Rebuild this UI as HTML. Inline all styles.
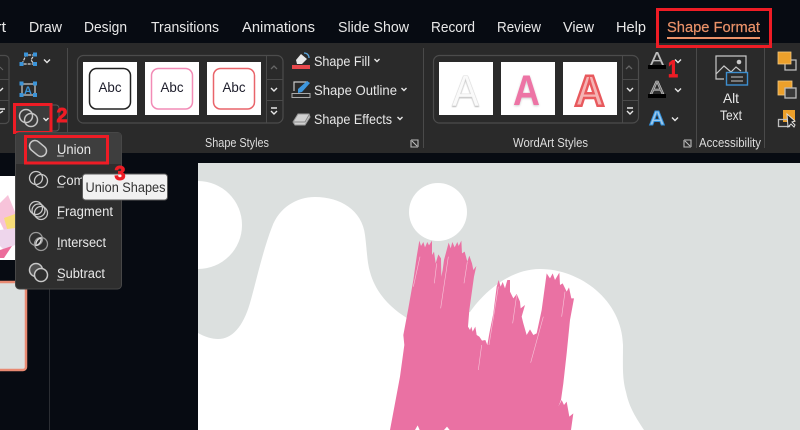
<!DOCTYPE html>
<html><head><meta charset="utf-8"><style>
html,body{margin:0;padding:0;width:800px;height:430px;overflow:hidden;background:#070b12}
svg{display:block}
text{font-family:"Liberation Sans",sans-serif;fill:#e8e8e8}
.t{font-size:14.5px}.r{font-size:14px}.s{font-size:12.5px;fill:#dcdcdc}.m{font-size:13.5px;fill:#e2e2e2}
.n{font-weight:bold;fill:#ee1c25;stroke:#ee1c25;stroke-width:.9;font-size:20px}
.c{fill:none;stroke:#e6e6e6;stroke-width:1.4}
.g{fill:none;stroke:#c8c8c8;stroke-width:1.3}
.b{fill:none;stroke:#ee1c25;stroke-width:3}
.l{stroke:#4a4a4a;stroke-width:1}
.bx{fill:none;stroke:#4c4c4c;stroke-width:1.2}
</style></head><body>
<svg width="800" height="430" viewBox="0 0 800 430" xmlns="http://www.w3.org/2000/svg">
<rect width="800" height="430" fill="#070b12"/>
<!-- tabs -->
<g class="t">
<text x="-4" y="32" textLength="10" lengthAdjust="spacingAndGlyphs">rt</text>
<text x="29" y="32" textLength="33" lengthAdjust="spacingAndGlyphs">Draw</text>
<text x="84" y="32" textLength="43" lengthAdjust="spacingAndGlyphs">Design</text>
<text x="151" y="32" textLength="68" lengthAdjust="spacingAndGlyphs">Transitions</text>
<text x="242" y="32" textLength="73" lengthAdjust="spacingAndGlyphs">Animations</text>
<text x="338" y="32" textLength="71" lengthAdjust="spacingAndGlyphs">Slide Show</text>
<text x="431" y="32" textLength="44" lengthAdjust="spacingAndGlyphs">Record</text>
<text x="497" y="32" textLength="44" lengthAdjust="spacingAndGlyphs">Review</text>
<text x="563" y="32" textLength="31" lengthAdjust="spacingAndGlyphs">View</text>
<text x="616" y="32" textLength="30" lengthAdjust="spacingAndGlyphs">Help</text>
<text x="667" y="32" textLength="93" lengthAdjust="spacingAndGlyphs" style="fill:#ea9269;stroke:#ea9269;stroke-width:.2">Shape Format</text>
</g>
<!-- ribbon -->
<rect x="0" y="43" width="800" height="110" fill="#2a2a2a"/>
<rect x="667" y="37" width="93" height="2" fill="#ea9269"/>
<rect class="b" x="657.500" y="9.500" width="113" height="37"/>
<line class="l" x1="67.500" y1="48" x2="67.500" y2="148"/>
<line class="l" x1="423.500" y1="48" x2="423.500" y2="148"/>
<line class="l" x1="696.500" y1="48" x2="696.500" y2="148"/>
<line class="l" x1="764.500" y1="48" x2="764.500" y2="148"/>

<!-- left stub gallery -->
<rect class="bx" x="-10" y="55.500" width="19" height="68" rx="4"/>
<line class="l" x1="0" y1="79.500" x2="9" y2="79.500"/><line class="l" x1="0" y1="100.500" x2="9" y2="100.500"/>
<path class="c" d="M0 91l3-3M0 109h5M0 113l3-2"/>
<path d="M0 67l3 3" stroke="#666" fill="none"/>

<!-- edit shape / textbox / merge icons -->
<path d="M22 64l4-9h8l-3 5 3 4z" fill="none" stroke="#d5d5d5" stroke-width="1.200" stroke-dasharray="3 1"/>
<g fill="#3b94d9"><rect x="19.500" y="62" width="4" height="4"/><rect x="33" y="62" width="4" height="4"/><rect x="24" y="52.500" width="4" height="4"/><rect x="33" y="52.500" width="4" height="4"/></g>
<path class="c" d="M44 59.500l3 3 3-3"/>
<rect x="22" y="84" width="13" height="11" fill="none" stroke="#d0d0d0" stroke-width="1.200"/>
<g fill="#3b94d9"><rect x="19.500" y="81.500" width="4" height="4"/><rect x="33" y="81.500" width="4" height="4"/><rect x="19.500" y="93" width="4" height="4"/><rect x="33" y="93" width="4" height="4"/></g>
<text x="24" y="94" style="font-size:11px;font-weight:bold;fill:#3b94d9">A</text>
<path d="M51 105h5a3 3 0 0 1 3 3v20a3 3 0 0 1-3 3h-5" fill="none" stroke="#5a5a5a"/>
<rect x="15" y="105" width="35" height="28" fill="#3c3c3c"/>
<circle cx="26" cy="116" r="6.500" fill="none" stroke="#c6c6c6" stroke-width="1.500"/><circle cx="31" cy="120" r="6.500" fill="none" stroke="#c6c6c6" stroke-width="1.500"/>
<path class="c" d="M43.500 118l2.500 2.500 2.500-2.500"/>
<rect class="b" x="14.500" y="104.500" width="36.500" height="28"/>
<text class="n" x="56.500" y="122" textLength="11" lengthAdjust="spacingAndGlyphs">2</text>

<!-- shape styles -->
<rect class="bx" x="77.500" y="55.500" width="205.500" height="67.500" rx="6"/>
<line class="l" x1="266.500" y1="56" x2="266.500" y2="123"/>
<line class="l" x1="267" y1="79.500" x2="283" y2="79.500"/><line class="l" x1="267" y1="100.500" x2="283" y2="100.500"/>
<rect x="83" y="62" width="54" height="53" fill="#fff"/>
<rect x="145" y="62" width="54" height="53" fill="#fff"/>
<rect x="207" y="62" width="54" height="53" fill="#fff"/>
<rect x="89.500" y="68.500" width="41" height="40.500" rx="7" fill="#fff" stroke="#222" stroke-width="1.500"/>
<rect x="151.500" y="68.500" width="41" height="40.500" rx="7" fill="#fff" stroke="#f28bb6" stroke-width="1.500"/>
<rect x="213.500" y="68.500" width="41" height="40.500" rx="7" fill="#fff" stroke="#e9646a" stroke-width="1.500"/>
<g style="font-size:13.500px">
<text x="98.500" y="92" textLength="23" lengthAdjust="spacingAndGlyphs" style="fill:#1c1c2a">Abc</text>
<text x="160.500" y="92" textLength="23" lengthAdjust="spacingAndGlyphs" style="fill:#1c1c2a">Abc</text>
<text x="222.500" y="92" textLength="23" lengthAdjust="spacingAndGlyphs" style="fill:#1c1c2a">Abc</text>
</g>
<path d="M271 69l3-3 3 3" fill="none" stroke="#666" stroke-width="1.300"/>
<path class="c" d="M271 88l3 3 3-3"/>
<path class="c" d="M271 108h6M271 111l3 3 3-3"/>
<text class="s" x="205" y="147" textLength="64" lengthAdjust="spacingAndGlyphs">Shape Styles</text>
<path d="M411 140h7v7M411 140v7h7M412 141l5 5" fill="none" stroke="#bbb" stroke-width="1.100"/>

<!-- fill / outline / effects -->
<path d="M296 60l5-6 6 5-5 5h-5z" fill="#e8e8e8"/><path d="M304 53c3 0 5 2 5 5" fill="none" stroke="#5aa7e0" stroke-width="1.300"/>
<rect x="292" y="65" width="18" height="4" fill="#e8484c"/>
<path d="M294 91v-9h14" fill="none" stroke="#c8c8c8" stroke-width="1.200"/><rect x="292" y="93.500" width="18" height="4" fill="none" stroke="#aaa"/>
<path d="M298 89l9-8 3 2-8 9-4 1z" fill="#3d97de"/>
<path d="M293 122l5-8h11l1 3-5 8h-10z" fill="#d0d0d0" stroke="#999"/><path d="M293 122h12l4-7" fill="none" stroke="#888"/>
<g class="r">
<text x="314" y="66" textLength="56" lengthAdjust="spacingAndGlyphs">Shape Fill</text>
<text x="314" y="95" textLength="83" lengthAdjust="spacingAndGlyphs">Shape Outline</text>
<text x="314" y="124" textLength="78" lengthAdjust="spacingAndGlyphs">Shape Effects</text>
</g>
<path class="c" d="M374.500 59l2.500 2.500 2.500-2.500M401.500 88l2.500 2.500 2.500-2.500M397.500 117l2.500 2.500 2.500-2.500"/>

<!-- wordart -->
<rect class="bx" x="433.500" y="55.500" width="205" height="67.500" rx="6"/>
<line class="l" x1="622.500" y1="56" x2="622.500" y2="123"/>
<line class="l" x1="622" y1="79.500" x2="638" y2="79.500"/><line class="l" x1="622" y1="100.500" x2="638" y2="100.500"/>
<rect x="439" y="62" width="54" height="53" fill="#fff"/>
<rect x="501" y="62" width="54" height="53" fill="#fff"/>
<rect x="563" y="62" width="54" height="53" fill="#fff"/>
<text x="452" y="106" textLength="27" lengthAdjust="spacingAndGlyphs" style="font-size:44px;fill:#fafafa;stroke:#dedede;stroke-width:.5;filter:drop-shadow(.5px 1px .5px #bbb)">A</text>
<text x="513" y="105" textLength="27" lengthAdjust="spacingAndGlyphs" style="font-size:43px;font-weight:bold;fill:#ed74a5;filter:drop-shadow(.5px 1.500px 1px #ccc)">A</text>
<text x="574.500" y="105.500" textLength="30" lengthAdjust="spacingAndGlyphs" style="font-size:44px;font-weight:bold;fill:#f5b4b4;stroke:#e8595d;stroke-width:2.500">A</text>
<path d="M626 69l3-3 3 3" fill="none" stroke="#666" stroke-width="1.300"/>
<path class="c" d="M627 88l3 3 3-3"/>
<path class="c" d="M627 108h6M627 111l3 3 3-3"/>
<text class="s" x="513" y="147" textLength="75" lengthAdjust="spacingAndGlyphs">WordArt Styles</text>
<path d="M684 140h7v7M684 140v7h7M685 141l5 5" fill="none" stroke="#bbb" stroke-width="1.100"/>

<!-- text fill icons -->
<text x="650" y="65" textLength="14" lengthAdjust="spacingAndGlyphs" style="font-size:18px;fill:#bdbdbd">A</text>
<rect x="648" y="65" width="18" height="4" fill="#000"/>
<text x="650" y="94" textLength="14" lengthAdjust="spacingAndGlyphs" style="font-size:18px;fill:#777;stroke:#cfcfcf;stroke-width:.5">A</text>
<rect x="648" y="94" width="18" height="4" fill="#000"/>
<text x="649" y="125" textLength="16" lengthAdjust="spacingAndGlyphs" style="font-size:20px;font-weight:bold;fill:#9cc8ea;stroke:#2e8fdd;stroke-width:.9">A</text>
<path class="c" d="M675 59.500l3 3 3-3M675 88.500l3 3 3-3M672 117.500l3 3 3-3"/>
<text class="n" x="668" y="77" textLength="10" lengthAdjust="spacingAndGlyphs" style="font-size:24px">1</text>

<!-- alt text -->
<path d="M724 79h-8v-23h30v16" fill="none" stroke="#c8c8c8" stroke-width="1.200"/>
<path d="M716 74l8-8 7 6 5-5 5 4" fill="none" stroke="#c8c8c8" stroke-width="1.200"/>
<circle cx="739" cy="62" r="2.300" fill="#c8c8c8"/>
<rect x="726.500" y="72.500" width="21" height="12.500" fill="#2a2a2a" stroke="#3d8fcf" stroke-width="1.400"/>
<path d="M731 77h12M731 81h12" stroke="#c8c8c8" stroke-width="1"/>
<text x="723" y="103" textLength="16" lengthAdjust="spacingAndGlyphs" class="r">Alt</text>
<text x="720" y="120" textLength="22" lengthAdjust="spacingAndGlyphs" class="r">Text</text>
<text class="s" x="699" y="147" textLength="62" lengthAdjust="spacingAndGlyphs">Accessibility</text>

<!-- arrange icons -->
<path d="M791 60h5v10h-11v-6" fill="none" stroke="#bdbdbd" stroke-width="1.300"/>
<rect x="778" y="52" width="13" height="12" fill="#eca02b" stroke="#f2c983" stroke-width=".8"/>
<rect x="778" y="81" width="14" height="14" fill="#eca02b" stroke="#f2c983" stroke-width=".8"/>
<rect x="785" y="88" width="11" height="10" fill="#3a3a3a" stroke="#bdbdbd" stroke-width="1.300"/>
<rect x="783" y="110" width="12" height="12" fill="#eca02b"/>
<rect x="778.500" y="119.500" width="11" height="7" fill="none" stroke="#bdbdbd" stroke-width="1.300"/>
<path d="M787 114l1 13 3-3 3 3 1-2-3-3 3-1z" fill="#222" stroke="#ddd"/>

<!-- left panel -->
<line x1="49.500" y1="289" x2="49.500" y2="430" stroke="#2b2e33"/>
<rect x="0" y="176" width="16" height="84" fill="#fff"/>
<polygon points="0,203 8,195 15,212 15,225 5,232 0,222" fill="#f7c3da"/>
<polygon points="4,218 15,214 15,228 8,232" fill="#f8dc78"/>
<polygon points="0,230 15,228 15,245 4,250 0,246" fill="#eed6ec"/>
<polygon points="0,250 12,246 4,258 0,258" fill="#ec6d9b"/>
<rect x="-4" y="282" width="30" height="88" rx="3" fill="#dce0df" stroke="#e88a72" stroke-width="2.500"/>

<!-- slide -->
<rect x="198" y="163" width="602" height="267" fill="#dce0df"/>
<path d="M198 333 C205 337 212 339 218 339 C232 339 243 327 250 303 C256 282 263 250 272 227 C279 208 296 197 315 197 C340 197 362 210 365 235 C367 250 367 262 370 272 C376 294 392 310 412 321 L470 312 C484 292 510 269 540 269 C580 269 622 300 623 345 C623 365 622 378 626 392 C629 407 636 418 644 430 L198 430 Z" fill="#fff"/>
<path d="M198 181 A44 44 0 0 1 198 269 Z" fill="#fff"/>
<circle cx="438" cy="212" r="29" fill="#fff"/>

<!-- brush -->
<g transform="translate(370 220) scale(.33333)">
<polygon fill="#ea71a3" points="60,630 75,550 90,470 103,375 100,345 115,265 130,180 140,110 148,62 153,78 160,66 165,82 172,66 177,76 186,62 186,105 192,95 197,130 205,103 213,115 214,170 218,150 222,120 236,68 242,85 247,66 254,82 262,66 266,78 274,62 276,100 284,95 292,125 298,107 306,130 310,150 319,138 312,170 305,220 298,270 294,320 300,330 304,320 308,335 316,320 320,345 328,350 336,362 346,360 352,375 358,340 370,280 380,200 386,180 392,200 398,186 405,205 412,180 420,180 420,215 430,235 440,222 450,245 452,265 465,255 455,290 460,310 470,345 480,328 490,345 500,340 515,270 530,160 540,175 548,160 555,180 568,158 570,195 578,190 590,215 597,202 604,235 612,235 600,300 590,400 580,490 573,540 565,560 575,540 582,555 590,545 598,590 610,580 603,630"/>
<g stroke="#f7c6da" stroke-width="1.800" fill="none">
<path d="M150 110 L130 200M200 130 L193 190M235 110 L212 265M292 125 L282 190M335 375 L325 450M385 200 L357 375M440 225 L428 310M520 290 L482 428M585 215 L575 290"/>
</g>
<path d="M135 630l8-14 6 14zM222 630l9-10 8 10z" fill="#fff"/>
</g>

<!-- menu -->
<rect x="15.500" y="132.500" width="106" height="156.500" rx="4" fill="#2e2e2e" stroke="#474747"/>
<rect x="16" y="133" width="105" height="31" fill="#3e3e3e"/>
<rect class="b" x="25.500" y="136.500" width="82" height="26.500"/>
<!-- icons -->
<path d="M35 146 L41 151" stroke="#c8c8c8" stroke-width="12.500" stroke-linecap="round"/>
<path d="M35 146 L41 151" stroke="#4d4d4d" stroke-width="9.500" stroke-linecap="round"/>
<circle class="g" cx="36" cy="178" r="6.500" stroke-width="1.500"/><circle class="g" cx="41" cy="181" r="6.500" stroke-width="1.500"/>
<circle class="g" cx="36" cy="208" r="6.500" stroke-width="1.500"/><circle class="g" cx="41" cy="213" r="6.500" stroke-width="1.500"/><circle class="g" cx="38.500" cy="210.500" r="6.500" stroke-width="1.100"/>
<circle class="g" cx="36" cy="239" r="6.500" stroke-width="1.200" style="stroke:#999"/><circle class="g" cx="41" cy="244" r="6.500" stroke-width="1.200" style="stroke:#999"/>
<path d="M41 238a6.500 6.500 0 0 1-5 7.500a6.500 6.500 0 0 1 5-7.500z" fill="none" stroke="#ddd" stroke-width="1.300"/>
<circle cx="36" cy="270" r="6.500" fill="#505050" stroke="#c8c8c8" stroke-width="1.500"/><circle cx="41" cy="275" r="6.500" fill="#2e2e2e" stroke="#c8c8c8" stroke-width="1.500"/>
<g class="m">
<text x="57" y="154" textLength="34" lengthAdjust="spacingAndGlyphs">Union</text>
<text x="57" y="185" textLength="52" lengthAdjust="spacingAndGlyphs">Combine</text>
<text x="57" y="216" textLength="56" lengthAdjust="spacingAndGlyphs">Fragment</text>
<text x="57" y="247" textLength="49" lengthAdjust="spacingAndGlyphs">Intersect</text>
<text x="57" y="278" textLength="48" lengthAdjust="spacingAndGlyphs">Subtract</text>
</g>
<path d="M57 156h7M57 187h7M57 218h7M57 249h4M57 280h7" stroke="#c8c8c8" stroke-width="1"/>
<!-- tooltip -->
<rect x="82.500" y="174" width="85" height="26" rx="3" fill="#f1f1f1" stroke="#5a5a5a"/>
<text x="85.500" y="192" textLength="80" lengthAdjust="spacingAndGlyphs" style="font-size:13.500px;fill:#333">Union Shapes</text>
<text class="n" x="114.500" y="180" textLength="11" lengthAdjust="spacingAndGlyphs">3</text>
</svg>
</body></html>
